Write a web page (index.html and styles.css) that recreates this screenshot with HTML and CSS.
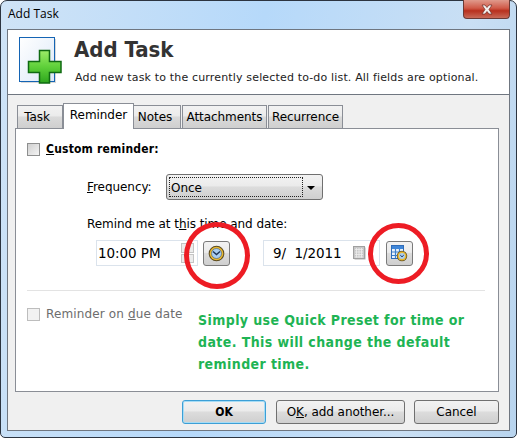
FILE: index.html
```html
<!DOCTYPE html>
<html lang="en">
<head>
    <meta charset="UTF-8">
    <meta name="viewport" content="width=device-width, initial-scale=1.0">
    <title>Add Task</title>
    <link rel="stylesheet" href="styles.css">
</head>
<body>
    <div class="window">
        <div class="titlebar">
            <span class="window-title">Add Task</span>
            <div class="close-btn">
                <svg width="16" height="11" viewBox="0 0 16 11"><path d="M3 1h3l2 2.500L10 1h3L10 5.500 13 10h-3L8 7.500 6 10H3l3-4.500z" fill="#f4f0ee" stroke="#6a2a22" stroke-width="0.7"/></svg>
            </div>
        </div>

        <div class="client">
            <div class="header">
                <svg class="header-icon" width="44" height="47" viewBox="0 0 44 47">
                    <defs>
                        <linearGradient id="docFill" x1="0" y1="0" x2="1" y2="1"><stop offset="0" stop-color="#fff"/><stop offset="1" stop-color="#dce8f8"/></linearGradient>
                        <linearGradient id="crossFill" x1="0" y1="0" x2="0" y2="1"><stop offset="0" stop-color="#9cec68"/><stop offset="0.5" stop-color="#5fd03a"/><stop offset="1" stop-color="#2da51d"/></linearGradient>
                    </defs>
                    <rect x="2" y="2" width="35" height="44" fill="#d8d8d8"/>
                    <rect x="0.500" y="0.500" width="35" height="44" fill="url(#docFill)" stroke="#1464b4"/>
                    <path d="M20.500 13.500h10v11h11.500v11H30.500v10.500h-10V35.500H9.500v-11h11z" fill="url(#crossFill)" stroke="#0f6a12" stroke-width="1.500"/>
                </svg>
                <div class="header-text">
                    <h1>Add Task</h1>
                    <p>Add new task to the currently selected to-do list. All fields are optional.</p>
                </div>
            </div>

            <div class="body">
                <div class="tabs">
                    <div class="tab tab-task">Task</div>
                    <div class="tab tab-active">Reminder</div>
                    <div class="tab tab-notes">Notes</div>
                    <div class="tab tab-attach">Attachments</div>
                    <div class="tab tab-recur">Recurrence</div>
                </div>

                <div class="panel">
                    <label class="check-row">
                        <span class="checkbox"></span>
                        <b><u>C</u>ustom reminder:</b>
                    </label>

                    <div class="freq-row">
                        <span class="freq-label"><u>F</u>requency:</span>
                        <div class="select">
                            <span class="select-value">Once</span>
                            <span class="select-arrow"></span>
                        </div>
                    </div>

                    <div class="remind-label">Remind me at t<u>h</u>is time and date:</div>

                    <div class="datetime-row">
                        <div class="field field-time">
                            <span>10:00 PM</span>
                            <span class="spin"><i></i><i></i></span>
                        </div>
                        <div class="preset-btn">
                            <svg width="17" height="17" viewBox="0 0 17 17">
                                <circle cx="8.500" cy="8.500" r="7.800" fill="#5a4a20"/>
                                <circle cx="8.500" cy="8.500" r="6.800" fill="#e8b830"/>
                                <circle cx="8.500" cy="8.500" r="5" fill="#a9cdf0" stroke="#3a5a86" stroke-width="0.6"/>
                                <path d="M5 6.500 8.500 9.500 12 6.500" fill="none" stroke="#1e3556" stroke-width="1.400"/>
                            </svg>
                        </div>
                        <div class="field field-date">
                            <span>9/&nbsp;&nbsp;1/2011</span>
                            <svg class="cal-small" width="13" height="14" viewBox="0 0 13 14">
                                <rect x="1.500" y="1.500" width="11" height="12" fill="#b0b0b0"/>
                                <rect x="0.500" y="0.500" width="11" height="12" fill="#c8c8c8" stroke="#a0a0a0"/>
                                <path d="M2 3.500h8M2 6h8M2 8.500h8M2 11h8M3.500 2v9.500M6 2v9.500M8.500 2v9.500" stroke="#ededed" stroke-width="0.8"/>
                            </svg>
                        </div>
                        <div class="preset-btn preset-date">
                            <svg width="17" height="17" viewBox="0 0 17 17">
                                <rect x="0.500" y="0.500" width="12" height="13" fill="#eaf2fb" stroke="#2f6cb8"/>
                                <rect x="1" y="1" width="11" height="3" fill="#3f86d8"/>
                                <path d="M1 7h11M1 10.500h11M4.500 4v9M8.500 4v9" stroke="#3d80cc" stroke-width="1.200"/>
                                <circle cx="11" cy="11" r="5.200" fill="#5a4a20"/>
                                <circle cx="11" cy="11" r="4.500" fill="#e8b830"/>
                                <circle cx="11" cy="11" r="3" fill="#a9cdf0"/>
                                <path d="M9.300 10.200 11 11.800l1.700-1.600" fill="none" stroke="#1e3556"/>
                            </svg>
                        </div>
                    </div>

                    <div class="separator"></div>

                    <label class="check-row check-disabled">
                        <span class="checkbox"></span>
                        <span>Reminder on <u>d</u>ue date</span>
                    </label>

                    <p class="note">Simply use Quick Preset for time or date. This will change the default reminder time.</p>

                    <!-- red marks drawn over the screenshot -->
                    <div class="mark mark-time"></div>
                    <div class="mark mark-date"></div>
                </div>

                <div class="buttons">
                    <div class="btn btn-ok">OK</div>
                    <div class="btn btn-another">O<u>K</u>, add another...</div>
                    <div class="btn btn-cancel">Cancel</div>
                </div>
            </div>
        </div>
    </div>
</body>
</html>
```

FILE: styles.css
```css
html, body {
    margin: 0;
    padding: 0;
}
body {
    width: 517px;
    height: 438px;
    overflow: hidden;
    background: #fff;
    font-family: "DejaVu Sans", sans-serif;
    font-size: 12px;
    letter-spacing: -0.06px;
    color: #000;
}
b {
    font-family: "DejaVu Sans Condensed", "DejaVu Sans", sans-serif;
    letter-spacing: 0.2px;
}
.window {
    box-sizing: border-box;
    width: 517px;
    height: 438px;
    padding: 0 6px 6px;
    display: flex;
    flex-direction: column;
    border: 1px solid #2c3440;
    border-radius: 7px 7px 5px 5px;
    background: linear-gradient(100deg, #cfe3f6 0%, #b6d9fa 45%, #c9dff4 80%, #b8d4ee 100%);
}
.titlebar {
    height: 28px;
    flex: none;
    display: flex;
    justify-content: space-between;
    align-items: flex-start;
}
.window-title {
    margin: 4px 0 0 1px;
    font-family: "Open Sans", sans-serif;
    font-size: 12px;
    letter-spacing: 0;
    line-height: 18px;
}
.close-btn {
    box-sizing: border-box;
    width: 47px;
    height: 19px;
    margin-top: -1px;
    display: flex;
    align-items: center;
    justify-content: center;
    border: 1px solid #6b3a36;
    border-top: none;
    border-radius: 0 0 4px 4px;
    background: linear-gradient(#e09a8c 0%, #d05a48 45%, #b8301e 60%, #c86a58 100%);
}
.client {
    flex: 1;
    display: flex;
    flex-direction: column;
    border: 1px solid #6f7680;
    background: #f0f0f0;
}
.header {
    box-sizing: border-box;
    height: 65px;
    flex: none;
    display: flex;
    padding: 7px 0 0 11px;
    background: #fff;
    border-bottom: 1px solid #6f7680;
}
.header-text {
    margin-left: 11px;
}
.header-text h1 {
    margin: -1px 0 0;
    font-family: "DejaVu Sans Condensed", "DejaVu Sans", sans-serif;
    font-size: 22px;
    letter-spacing: 0;
    line-height: 28px;
    color: #333;
}
.header-text p {
    margin: 6px 0 0 1px;
    font-size: 11px;
    line-height: 16px;
    letter-spacing: 0.16px;
    color: #222;
}
.body {
    flex: 1;
    display: flex;
    flex-direction: column;
    padding: 8px 10px 0 7px;
}
.tabs {
    height: 25px;
    flex: none;
    display: flex;
    align-items: flex-end;
    padding-left: 2px;
    position: relative;
    z-index: 1;
}
.tab {
    box-sizing: border-box;
    height: 23px;
    display: flex;
    align-items: center;
    justify-content: center;
    border: 1px solid #8a8e96;
    border-bottom: none;
    background: linear-gradient(#f2f2f2 0%, #ebebeb 45%, #dadada 50%, #cfcfcf 100%);
}
.tab-task { width: 46px; padding-right: 6px; }
.tab-active {
    width: 71px;
    height: 26px;
    margin-bottom: -1px;
    padding: 0 0 4px;
    background: #fff;
}
.tab-notes { width: 47px; border-left: none; padding-right: 4px; }
.tab-attach { width: 85px; margin-left: 1px; }
.tab-recur { width: 75px; margin-left: 1px; }
.panel {
    box-sizing: border-box;
    height: 264px;
    flex: none;
    position: relative;
    padding: 12px 11px 0;
    background: #fff;
    border: 1px solid #8a8e96;
}
.check-row {
    display: flex;
    align-items: center;
    line-height: 16px;
}
.checkbox {
    box-sizing: border-box;
    width: 13px;
    height: 13px;
    margin-right: 6px;
    border: 1px solid #8e8f8f;
    background: linear-gradient(135deg, #d0d0d0, #f4f4f4);
}
.freq-row {
    display: flex;
    align-items: center;
    margin: 17px 0 0 60px;
}
.freq-label {
    width: 79px;
}
.select {
    box-sizing: border-box;
    width: 157px;
    height: 26px;
    display: flex;
    align-items: center;
    justify-content: space-between;
    padding: 2px 0 0 4px;
    border: 1px solid #707070;
    border-radius: 3px;
    background: linear-gradient(#f2f2f2 0%, #ebebeb 45%, #dcdcdc 50%, #cfcfcf 100%);
}
.select-value {
    box-sizing: border-box;
    width: 134px;
    height: 20px;
    margin: -2px 0 0 -2px;
    padding-left: 1px;
    line-height: 20px;
    border: 1px dotted #222;
}
.select-arrow {
    width: 0;
    height: 0;
    margin: 0 7px 0 0;
    border-left: 4px solid transparent;
    border-right: 4px solid transparent;
    border-top: 4px solid #000;
}
.remind-label {
    margin: 16px 0 0 60px;
    line-height: 16px;
}
.datetime-row {
    display: flex;
    align-items: center;
    margin: 8px 0 0 69px;
}
.field {
    box-sizing: border-box;
    height: 26px;
    display: flex;
    align-items: center;
    border: 1px solid #dbe3ec;
    background: #fff;
    font-size: 13.500px;
}
.field-time {
    width: 102px;
    padding-left: 1px;
    justify-content: space-between;
}
.spin {
    display: flex;
    flex-direction: column;
    width: 13px;
    height: 20px;
    margin-right: 3px;
    gap: 1px;
}
.spin i {
    flex: 1;
    box-sizing: border-box;
    border: 1px solid #c4c4c4;
    background: #ececec;
}
.field-date {
    width: 117px;
    padding-left: 9px;
    justify-content: space-between;
}
.cal-small {
    margin-right: 13px;
}
.preset-btn {
    box-sizing: border-box;
    width: 27px;
    height: 25px;
    margin: 0 33px 0 5px;
    display: flex;
    align-items: center;
    justify-content: center;
    border: 1px solid #7a7a7a;
    border-radius: 3px;
    background: linear-gradient(#f2f2f2 0%, #ebebeb 45%, #dcdcdc 50%, #cfcfcf 100%);
}
.preset-date {
    margin-right: 0;
    margin-left: 6px;
}
.separator {
    width: 458px;
    height: 1px;
    margin: 24px 0 0;
    background: #e3e3e3;
}
.check-disabled {
    margin-top: 15px;
    letter-spacing: 0.14px;
    color: #6d6d6d;
}
.check-disabled .checkbox {
    border-color: #bdbdbd;
    background: #f2f2f2;
}
.note {
    width: 286px;
    margin: -13px 0 0 171px;
    font-family: "DejaVu Sans Condensed", "DejaVu Sans", sans-serif;
    font-size: 14px;
    font-weight: bold;
    line-height: 22px;
    letter-spacing: 0.4px;
    color: #1eb454;
}
.mark {
    position: absolute;
    box-sizing: border-box;
    border: 5px solid #ed1c24;
    border-radius: 50%;
}
.mark-time {
    left: 168px;
    top: 93px;
    width: 66px;
    height: 67px;
}
.mark-date {
    left: 352px;
    top: 94px;
    width: 61px;
    height: 61px;
}
.buttons {
    display: flex;
    margin: 8px 0 0 167px;
}
.btn {
    box-sizing: border-box;
    height: 24px;
    display: flex;
    align-items: center;
    justify-content: center;
    border: 1px solid #707070;
    border-radius: 3px;
    background: linear-gradient(#f2f2f2 0%, #ebebeb 45%, #dcdcdc 50%, #cfcfcf 100%);
}
.btn-ok {
    width: 84px;
    font-family: "DejaVu Sans Condensed", "DejaVu Sans", sans-serif;
    font-weight: bold;
    border-color: #3c9fd6;
    box-shadow: inset 0 0 0 1px #a6dcf5;
}
.btn-another {
    width: 129px;
    margin-left: 10px;
}
.btn-cancel {
    width: 85px;
    margin-left: 9px;
}
```
